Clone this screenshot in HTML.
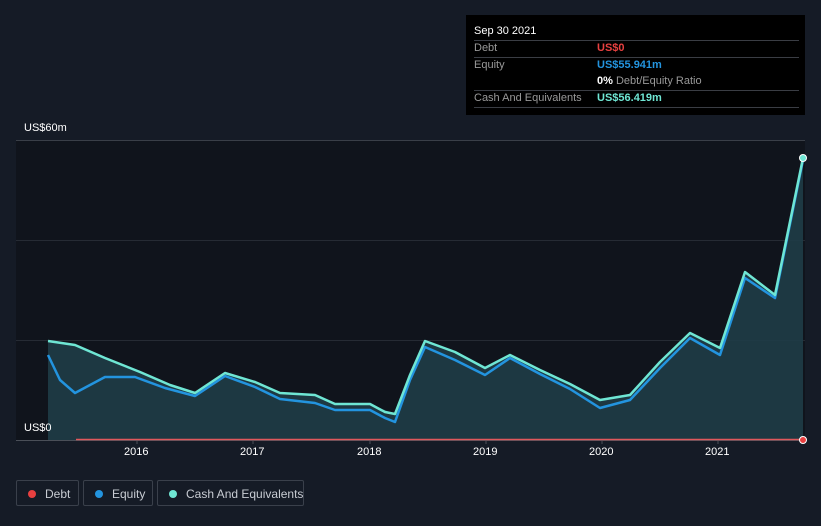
<!DOCTYPE html>
<html><head><meta charset="utf-8"><style>
body{margin:0;width:821px;height:526px;background:#151b26;font-family:"Liberation Sans",sans-serif;overflow:hidden;position:relative}
.tt{position:absolute;left:466px;top:15px;width:339px;height:100px;background:#000;color:#fff;font-size:11px}
.tt .r{position:absolute;left:8px;right:6px;border-top:1px solid #3a3d44}
.tt span{position:absolute;white-space:nowrap}
.lg{position:absolute;top:480px;height:26px;border:1px solid #3a404b;border-radius:2px;color:#c8ccd3;font-size:12px;line-height:26px;box-sizing:border-box;white-space:nowrap}
.lg i{position:absolute;left:11px;top:9px;width:8px;height:8px;border-radius:50%}
.lg b{font-weight:normal;position:absolute;left:28px}
.ax{position:absolute;color:#fff;font-size:11px}
</style></head><body>
<svg width="821" height="526" style="position:absolute;left:0;top:0">
<rect x="16" y="140" width="789" height="300" fill="#10141c"/>
<line x1="16" y1="140.5" x2="805" y2="140.5" stroke="#3a3f48"/>
<line x1="16" y1="240.5" x2="805" y2="240.5" stroke="#262b34"/>
<line x1="16" y1="340.5" x2="805" y2="340.5" stroke="#262b34"/>
<line x1="16" y1="440.5" x2="805" y2="440.5" stroke="#4a4f58"/>
<g stroke="#4a4f58"><line x1="137" y1="440" x2="137" y2="444"/><line x1="253" y1="440" x2="253" y2="444"/><line x1="370" y1="440" x2="370" y2="444"/><line x1="486" y1="440" x2="486" y2="444"/><line x1="602" y1="440" x2="602" y2="444"/><line x1="718" y1="440" x2="718" y2="444"/></g>
<polygon fill="#1f3c47" opacity="0.9" points="48,341 75,345 105,358 140,372 170,385 195,393 225,373 255,382 280,393 315,395 335,404 370,404 395,414 425,341 455,352 485,368 510,355 540,370 570,384 600,400 630,395 660,362 690,333 720,348 745,272 775,295 803,158 803,440 48,440"/>
<polyline fill="none" stroke="#2394df" stroke-width="2.5" stroke-linejoin="round" points="48,355 60,380 75,393 90,385 105,377 135,377 165,388 195,396 225,376 255,387 280,399 315,403 335,410 370,410 385,418 395,422 410,380 425,347 455,360 485,375 510,358 540,374 570,389 600,408 630,400 660,368 690,338 720,355 745,278 775,298 803,160"/>
<polyline fill="none" stroke="#6fe6d4" stroke-width="2.5" stroke-linejoin="round" points="48,341 75,345 105,358 140,372 170,385 195,393 225,373 255,382 280,393 315,395 335,404 370,404 385,412 395,414 410,375 425,341 455,352 485,368 510,355 540,370 570,384 600,400 630,395 660,362 690,333 720,348 745,272 775,295 803,158"/>
<line x1="76" y1="439.5" x2="803" y2="439.5" stroke="#e0585c" stroke-width="1.5"/>
<circle cx="803" cy="440" r="3.5" fill="#e84040" stroke="#fff" stroke-width="1"/>
<circle cx="803" cy="158" r="3.5" fill="#6fe6d4" stroke="#fff" stroke-width="1"/>
</svg>
<div class="ax" style="left:24px;top:122px">US$60m</div>
<div class="ax" style="left:24px;top:422px">US$0</div>
<div class="ax" style="left:124px;top:446px">2016</div>
<div class="ax" style="left:240px;top:446px">2017</div>
<div class="ax" style="left:357px;top:446px">2018</div>
<div class="ax" style="left:473px;top:446px">2019</div>
<div class="ax" style="left:589px;top:446px">2020</div>
<div class="ax" style="left:705px;top:446px">2021</div>
<div class="tt">
<span style="left:8px;top:10px">Sep 30 2021</span>
<div class="r" style="top:25px"></div>
<span style="left:8px;top:27px;color:#999">Debt</span><span style="left:131px;top:27px;color:#e84040;font-weight:bold">US$0</span>
<div class="r" style="top:42px"></div>
<span style="left:8px;top:44px;color:#999">Equity</span><span style="left:131px;top:44px;color:#2394df;font-weight:bold">US$55.941m</span>
<span style="left:131px;top:60px;color:#fff"><b>0%</b> <span style="position:static;color:#999">Debt/Equity Ratio</span></span>
<div class="r" style="top:75px"></div>
<span style="left:8px;top:77px;color:#999">Cash And Equivalents</span><span style="left:131px;top:77px;color:#6fe6d4;font-weight:bold">US$56.419m</span>
<div class="r" style="top:92px"></div>
</div>
<div class="lg" style="left:16px;width:63px"><i style="background:#e84040"></i><b>Debt</b></div>
<div class="lg" style="left:83px;width:70px"><i style="background:#2394df"></i><b>Equity</b></div>
<div class="lg" style="left:157px;width:147px"><i style="background:#6fe6d4"></i><b>Cash And Equivalents</b></div>
</body></html>
